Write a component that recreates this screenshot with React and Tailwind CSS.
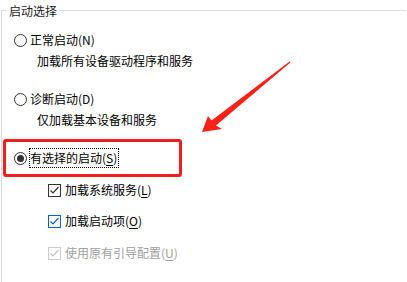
import React from "react";

const font = { fontFamily: '"Noto Sans CJK SC", "Noto Sans", sans-serif' };

function Radio({ checked }) {
  return (
    <span className="relative flex h-[13px] w-[13px] shrink-0 items-center justify-center rounded-full border border-[#333333] bg-white">
      {checked && <span className="block h-[7px] w-[7px] rounded-full bg-[#333333]" />}
    </span>
  );
}

function Check({ color, border }) {
  return (
    <span className={`flex h-[13px] w-[13px] shrink-0 items-center justify-center border bg-white ${border}`}>
      <svg width="11" height="11" viewBox="0 0 11 11">
        <polyline points="1.5,5.5 4,8 9.5,2" fill="none" stroke={color} strokeWidth="1.2" />
      </svg>
    </span>
  );
}

export default function App() {
  return (
    <div className="relative h-[282px] w-[407px] overflow-hidden bg-white text-[12px] text-black" style={font}>
      <fieldset className="ml-[1px] h-[282px] w-[405px] border-l border-t border-[#dcdcdc] p-0">
        <legend className="ml-[5px] px-[2px] leading-[21px] text-[#1a1a1a]">启动选择</legend>

        <div className="mt-[9px] flex h-[20px] items-center gap-[3px] pl-[12px]">
          <Radio />
          <span className="leading-[20px]">正常启动(N)</span>
        </div>
        <div className="mt-[1px] pl-[35px] leading-[20px]">加载所有设备驱动程序和服务</div>

        <div className="mt-[18px] flex h-[20px] items-center gap-[3px] pl-[12px]">
          <Radio />
          <span className="leading-[20px]">诊断启动(D)</span>
        </div>
        <div className="mt-[1px] pl-[35px] leading-[20px]">仅加载基本设备和服务</div>

        <div className="ml-[1px] mt-[9px] h-[38px] w-[179px] rounded-[3px] border-[3px] border-[#f21d1d] pl-[8px] pt-[6px]">
          <div className="flex h-[20px] items-center gap-[2px]">
            <Radio checked />
            <span className="border border-dotted border-black pr-[1px] leading-[18px]">
              有选择的启动(<span className="underline underline-offset-2">S</span>)
            </span>
          </div>
        </div>

        <div className="mt-[3px] flex h-[20px] items-center gap-[4px] pl-[46px]">
          <Check color="#333333" border="border-[#333333]" />
          <span className="leading-[20px]">加载系统服务(<span className="underline underline-offset-2">L</span>)</span>
        </div>
        <div className="mt-[11px] flex h-[20px] items-center gap-[4px] pl-[46px]">
          <Check color="#0a64c8" border="border-[#0a64c8]" />
          <span className="leading-[20px]">加载启动项(<span className="underline underline-offset-2">O</span>)</span>
        </div>
        <div className="mt-[12px] flex h-[20px] items-center gap-[4px] pl-[46px]">
          <Check color="#c4c4c4" border="border-[#cccccc]" />
          <span className="leading-[20px] text-[#a0a0a0]">使用原有引导配置(<span className="underline underline-offset-2">U</span>)</span>
        </div>
      </fieldset>

      <svg className="pointer-events-none absolute left-0 top-0" width="407" height="282" viewBox="0 0 407 282">
        <polygon
          points="202,132 208,116 211.5,120.5 289.6,61.4 290.4,62.6 216,125.5 222,129"
          fill="#fa2117"
        />
      </svg>
    </div>
  );
}
